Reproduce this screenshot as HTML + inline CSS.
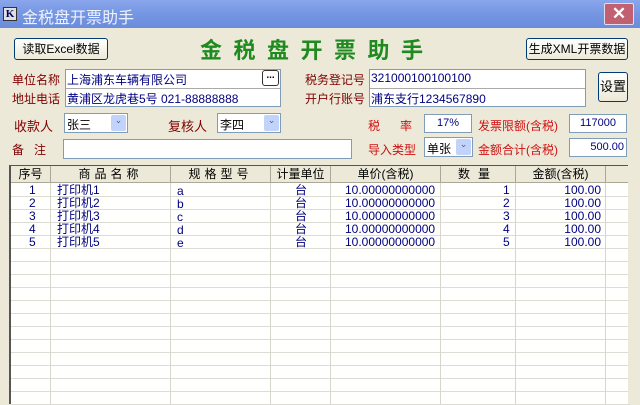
<!DOCTYPE html>
<html><head><meta charset="utf-8"><style>
*{margin:0;padding:0;box-sizing:border-box}
body{width:640px;height:404px;overflow:hidden;background:#ece9d8;font-family:"Liberation Sans","Noto Sans CJK SC",sans-serif;font-size:12px;position:relative}
.a{position:absolute;white-space:nowrap}
.tb{position:absolute;left:0;top:0;width:640px;height:28px;background:linear-gradient(#8aa6ec,#7596e2 50%,#6b8cdc);}
.lbl{color:#800000;font-size:12px}
.red{color:#d01010;font-size:12px}
.box{position:absolute;background:#fff;border:1px solid #7f9db9}
.btn{position:absolute;border:1px solid #003c74;border-radius:3px;background:linear-gradient(#fff,#ece9d8);text-align:center;font-size:12px;color:#000}
.val{color:#000080;font-size:12px}
.cb{position:absolute;width:15px;top:1px;bottom:1px;right:1px;background:#c1d3fb;border-radius:2px;color:#4d6185;font-size:9px;text-align:center}
.grid{position:absolute;left:9px;top:165px;width:619px;height:239px;background:#fffffd;border-left:2px solid #555;border-top:1px solid #555}
.hl{position:absolute;left:0;width:619px;height:1px;background:#dcdcd4}
.vl{position:absolute;top:0;bottom:0;width:1px;background:#d6d6cc}
.hd{position:absolute;top:0;height:17px;background:#ece9d8;border-right:1px solid #aca899;border-bottom:1px solid #aca899;text-align:center;font-size:12px;line-height:16px;color:#000}
.c{position:absolute;font-size:12px;color:#000080;line-height:13px}
</style></head><body>
<div class="tb"></div>
<div class="a" style="left:3px;top:7px;width:14px;height:14px;background:#e0e0e0;border:1px solid #333;font:bold 11px 'Liberation Serif';color:#000060;text-align:center;line-height:12px">K</div>
<div class="a" style="left:22px;top:4px;color:#eef2ff;font-size:16px">金税盘开票助手</div>
<div class="a" style="left:604px;top:3px;width:30px;height:22px;background:#c06070;border:1px solid #dde;border-radius:2px;color:#fff;font-size:17px;text-align:center;line-height:20px;font-weight:bold">✕</div>

<div class="btn" style="left:14px;top:38px;width:94px;height:22px;line-height:20px">读取Excel数据</div>
<div class="a" style="left:200px;top:33px;color:#1f8a1f;font-size:22px;font-weight:bold;letter-spacing:11.5px">金税盘开票助手</div>
<div class="btn" style="left:526px;top:38px;width:102px;height:22px;line-height:20px">生成XML开票数据</div>

<div class="a lbl" style="left:12px;top:71px">单位名称</div>
<div class="a lbl" style="left:12px;top:90px">地址电话</div>
<div class="box" style="left:65px;top:69px;width:216px;height:38px"></div>
<div class="a" style="left:66px;top:88px;width:214px;height:1px;background:#aaa"></div>
<div class="a val" style="left:67px;top:71px">上海浦东车辆有限公司</div>
<div class="a val" style="left:67px;top:90px">黄浦区龙虎巷5号 021-88888888</div>
<div class="a" style="left:262px;top:70px;width:17px;height:16px;border:1px solid #333;border-radius:3px;background:#fff;text-align:center;font-size:10px;line-height:10px;font-weight:bold">...</div>

<div class="a" style="left:305px;top:71px;color:#800000">税务登记号</div>
<div class="a" style="left:305px;top:90px;color:#800000">开户行账号</div>
<div class="box" style="left:369px;top:69px;width:217px;height:38px"></div>
<div class="a" style="left:370px;top:88px;width:215px;height:1px;background:#aaa"></div>
<div class="a val" style="left:371px;top:71px">321000100100100</div>
<div class="a val" style="left:371px;top:90px">浦东支行1234567890</div>
<div class="btn" style="left:598px;top:72px;width:30px;height:30px;line-height:28px;font-size:13px">设置</div>

<div class="a lbl" style="left:14px;top:116px;font-size:13px">收款人</div>
<div class="box" style="left:64px;top:113px;width:64px;height:20px"><span class="a" style="left:2px;top:2px">张三</span><div class="cb">⌄</div></div>
<div class="a lbl" style="left:168px;top:116px;font-size:13px">复核人</div>
<div class="box" style="left:217px;top:113px;width:64px;height:20px"><span class="a" style="left:2px;top:2px">李四</span><div class="cb">⌄</div></div>

<div class="a red" style="left:368px;top:117px">税&nbsp;&nbsp;&nbsp;&nbsp;&nbsp;&nbsp;率</div>
<div class="box" style="left:424px;top:114px;width:48px;height:19px;text-align:center;line-height:17px;color:#000080;font-size:11px">17%</div>
<div class="a red" style="left:478px;top:117px">发票限额(含税)</div>
<div class="box" style="left:569px;top:114px;width:58px;height:19px;text-align:center;line-height:17px;color:#000080;font-size:11px">117000</div>

<div class="a lbl" style="left:12px;top:141px">备&nbsp;&nbsp;&nbsp;注</div>
<div class="box" style="left:63px;top:139px;width:289px;height:20px"></div>
<div class="a red" style="left:368px;top:141px">导入类型</div>
<div class="box" style="left:424px;top:137px;width:49px;height:20px"><span class="a" style="left:2px;top:2px">单张</span><div class="cb">⌄</div></div>
<div class="a red" style="left:478px;top:141px">金额合计(含税)</div>
<div class="box" style="left:569px;top:138px;width:58px;height:19px;text-align:right;padding-right:2px;line-height:17px;color:#000080;font-size:11px">500.00</div>

<div class="grid">
<div class="hl" style="top:30px"></div><div class="hl" style="top:43px"></div><div class="hl" style="top:56px"></div><div class="hl" style="top:69px"></div><div class="hl" style="top:82px"></div><div class="hl" style="top:95px"></div><div class="hl" style="top:108px"></div><div class="hl" style="top:121px"></div><div class="hl" style="top:134px"></div><div class="hl" style="top:147px"></div><div class="hl" style="top:160px"></div><div class="hl" style="top:173px"></div><div class="hl" style="top:186px"></div><div class="hl" style="top:199px"></div><div class="hl" style="top:212px"></div><div class="hl" style="top:225px"></div><div class="hl" style="top:238px"></div>
<div class="vl" style="left:39px"></div><div class="vl" style="left:159px"></div><div class="vl" style="left:259px"></div><div class="vl" style="left:319px"></div><div class="vl" style="left:429px"></div><div class="vl" style="left:504px"></div><div class="vl" style="left:594px"></div>
<div class="hd" style="left:0;width:40px">序号</div>
<div class="hd" style="left:40px;width:120px;letter-spacing:4px">商品名称</div>
<div class="hd" style="left:160px;width:100px;letter-spacing:4px">规格型号</div>
<div class="hd" style="left:260px;width:60px">计量单位</div>
<div class="hd" style="left:320px;width:110px">单价(含税)</div>
<div class="hd" style="left:430px;width:75px;letter-spacing:8px">数量</div>
<div class="hd" style="left:505px;width:90px">金额(含税)</div>
<div class="hd" style="left:595px;width:24px"></div>
<div style="position:absolute;left:0;top:18px;width:619px">
<div class="c" style="left:18px;top:0">1<br>2<br>3<br>4<br>5</div>
<div class="c" style="left:46px;top:0">打印机1<br>打印机2<br>打印机3<br>打印机4<br>打印机5</div>
<div class="c" style="left:166px;top:1px">a<br>b<br>c<br>d<br>e</div>
<div class="c" style="left:284px;top:0">台<br>台<br>台<br>台<br>台</div>
<div class="c" style="left:334px;top:0">10.00000000000<br>10.00000000000<br>10.00000000000<br>10.00000000000<br>10.00000000000</div>
<div class="c" style="left:492px;top:0">1<br>2<br>3<br>4<br>5</div>
<div class="c" style="left:548px;top:0;text-align:right;width:42px">100.00<br>100.00<br>100.00<br>100.00<br>100.00</div>
</div>
</div>
<div class="a" style="left:628px;top:165px;width:12px;height:239px;background:#ece9d8"></div>
</body></html>
